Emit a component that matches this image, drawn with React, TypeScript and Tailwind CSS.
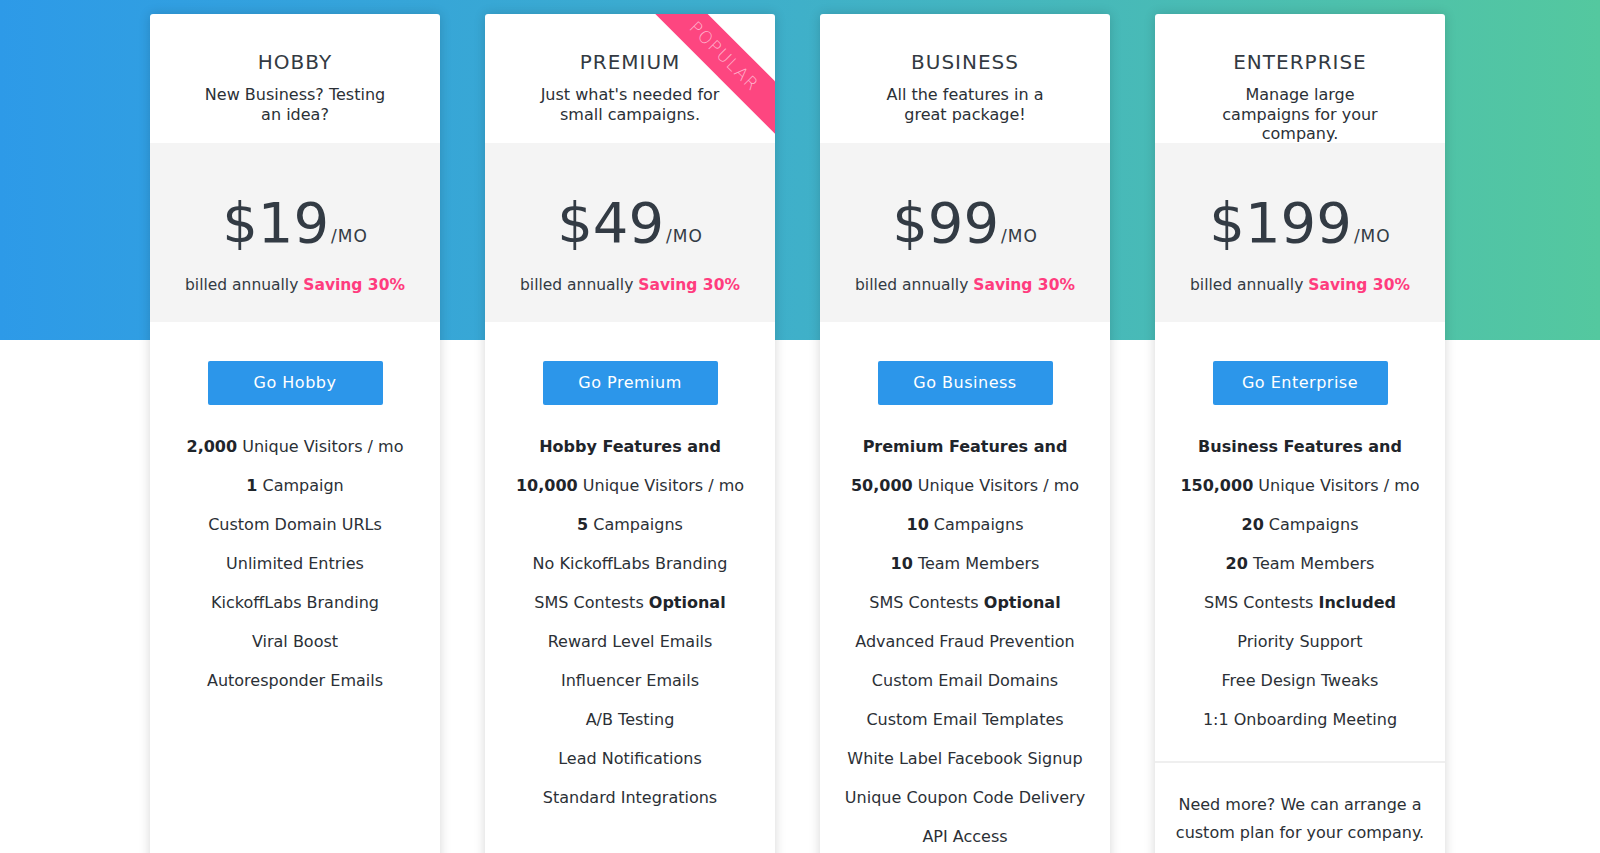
import type { ReactNode } from "react"

type Plan = {
  name: string
  desc: string
  price: string
  cta: string
  popular?: boolean
  features: ReactNode[]
  footer?: string
}

const plans: Plan[] = [
  {
    name: "HOBBY",
    desc: "New Business? Testing an idea?",
    price: "19",
    cta: "Go Hobby",
    features: [
      <><b>2,000</b> Unique Visitors / mo</>,
      <><b>1</b> Campaign</>,
      "Custom Domain URLs",
      "Unlimited Entries",
      "KickoffLabs Branding",
      "Viral Boost",
      "Autoresponder Emails",
    ],
  },
  {
    name: "PREMIUM",
    desc: "Just what's needed for small campaigns.",
    price: "49",
    cta: "Go Premium",
    popular: true,
    features: [
      <b>Hobby Features and</b>,
      <><b>10,000</b> Unique Visitors / mo</>,
      <><b>5</b> Campaigns</>,
      "No KickoffLabs Branding",
      <>SMS Contests <b>Optional</b></>,
      "Reward Level Emails",
      "Influencer Emails",
      "A/B Testing",
      "Lead Notifications",
      "Standard Integrations",
    ],
  },
  {
    name: "BUSINESS",
    desc: "All the features in a great package!",
    price: "99",
    cta: "Go Business",
    features: [
      <b>Premium Features and</b>,
      <><b>50,000</b> Unique Visitors / mo</>,
      <><b>10</b> Campaigns</>,
      <><b>10</b> Team Members</>,
      <>SMS Contests <b>Optional</b></>,
      "Advanced Fraud Prevention",
      "Custom Email Domains",
      "Custom Email Templates",
      "White Label Facebook Signup",
      "Unique Coupon Code Delivery",
      "API Access",
    ],
  },
  {
    name: "ENTERPRISE",
    desc: "Manage large campaigns for your company.",
    price: "199",
    cta: "Go Enterprise",
    features: [
      <b>Business Features and</b>,
      <><b>150,000</b> Unique Visitors / mo</>,
      <><b>20</b> Campaigns</>,
      <><b>20</b> Team Members</>,
      <>SMS Contests <b>Included</b></>,
      "Priority Support",
      "Free Design Tweaks",
      "1:1 Onboarding Meeting",
    ],
    footer: "Need more? We can arrange a custom plan for your company.",
  },
]

function PlanCard({ plan }: { plan: Plan }) {
  return (
    <div className="relative w-[290px] shrink-0 overflow-hidden rounded-t-[3px] bg-white pb-10 shadow-[0_0_12px_rgba(0,0,0,0.16)]">
      {plan.popular && (
        <div className="absolute left-[139px] top-[24px] flex h-[37px] w-[200px] rotate-45 items-center justify-center bg-[#fd4680] font-['DejaVu_Sans',sans-serif] text-[17px] font-extralight tracking-[1.5px] text-[#ffb0cb]">
          POPULAR
        </div>
      )}

      {/* header */}
      <div className="flex h-[129px] flex-col items-center pt-[36px] text-[#333a42]">
        <h2 className="text-[20px] leading-[24px] tracking-[1px]">{plan.name}</h2>
        <p className="mt-[11px] max-w-[190px] text-center text-[16px] leading-[19.5px] text-[#2b3036]">
          {plan.desc}
        </p>
      </div>

      {/* price */}
      <div className="flex h-[179px] flex-col items-center bg-[#f4f4f4] pt-[51px]">
        <div className="flex items-baseline text-[#333b44]">
          <span className="text-[56px] leading-[58px]">${plan.price}</span>
          <span className="ml-[2px] text-[17px] tracking-[1px]">/MO</span>
        </div>
        <p className="mt-[22px] text-[15.5px] leading-[22px] text-[#333a42]">
          billed annually <b className="text-[#ff3c7e]">Saving 30%</b>
        </p>
      </div>

      <div className="flex flex-col items-center">
        <button className="mt-[39px] h-[44px] w-[175px] rounded-[2px] bg-[#2c96ea] text-[16px] tracking-[0.5px] text-white">
          {plan.cta}
        </button>

        <ul className="mt-[22px] flex flex-col items-center text-[16px] text-[#2b3036]">
          {plan.features.map((f, i) => (
            <li key={i} className="leading-[39px] [&_b]:font-bold [&_b]:text-[#1f252b]">
              {f}
            </li>
          ))}
        </ul>
      </div>

      {plan.footer && (
        <div className="mt-[22px] border-t-2 border-[#efefef] px-5 pt-[28px] text-center text-[16px] leading-[28px] text-[#2b3036]">
          {plan.footer}
        </div>
      )}
    </div>
  )
}

export default function App() {
  return (
    <div className="min-h-screen bg-white bg-[linear-gradient(90deg,#2d9ae8_0%,#3fb0c9_50%,#54c89f_100%)] bg-[length:100%_340px] bg-no-repeat font-['DejaVu_Sans',Verdana,sans-serif]">
      <div className="flex justify-center gap-[45px] pt-[14px] pr-[5px] pb-10">
        {plans.map((p) => (
          <PlanCard key={p.name} plan={p} />
        ))}
      </div>
    </div>
  )
}
